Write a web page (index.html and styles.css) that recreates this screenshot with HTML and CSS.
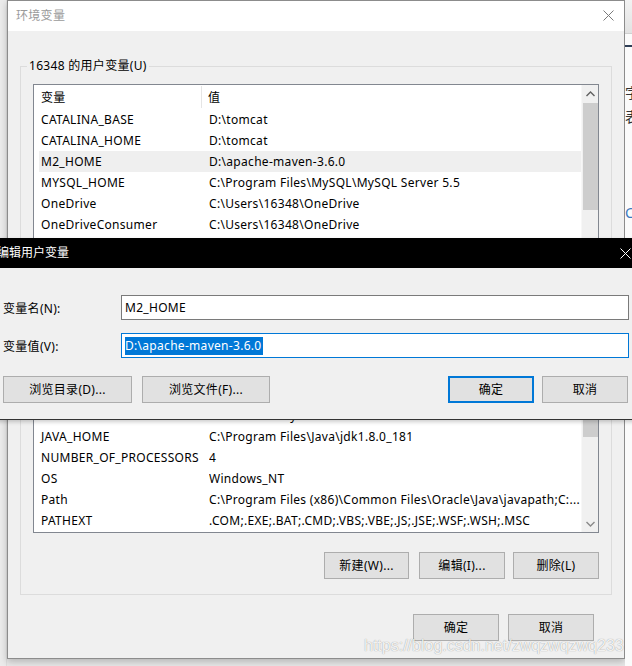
FILE: index.html
```html
<!DOCTYPE html>
<html lang="zh-CN">
<head>
<meta charset="utf-8">
<title>环境变量</title>
<link rel="stylesheet" href="styles.css">
</head>
<body>
<div class="desk">
  <div class="strip-left"></div>
  <div class="win">
    <div class="titlebar">
      <span class="title">环境变量</span>
      <svg class="close" width="11" height="11" viewBox="0 0 11 11"><path d="M0.5 0.5L10.5 10.5M10.5 0.5L0.5 10.5" stroke="#7a7a7a" stroke-width="1" fill="none"/></svg>
    </div>
    <div class="winbody">
      <fieldset class="group">
        <legend>16348 的用户变量(U)</legend>
        <div class="list">
          <div class="list-main">
            <div class="hdr"><div class="hc1">变量</div><div class="hc2">值</div></div>
            <div class="rows">
              <div class="row"><span class="c1">CATALINA_BASE</span><span class="c2">D:\tomcat</span></div>
              <div class="row"><span class="c1">CATALINA_HOME</span><span class="c2">D:\tomcat</span></div>
              <div class="row sel"><span class="c1">M2_HOME</span><span class="c2">D:\apache-maven-3.6.0</span></div>
              <div class="row"><span class="c1">MYSQL_HOME</span><span class="c2">C:\Program Files\MySQL\MySQL Server 5.5</span></div>
              <div class="row"><span class="c1">OneDrive</span><span class="c2">C:\Users\16348\OneDrive</span></div>
              <div class="row"><span class="c1">OneDriveConsumer</span><span class="c2">C:\Users\16348\OneDrive</span></div>
            </div>
            <div class="rows rows-bottom">
              <div class="row"><span class="c1">DriverData</span><span class="c2">C:\Windows\System32\Drivers\DriverData</span></div>
              <div class="row"><span class="c1">JAVA_HOME</span><span class="c2">C:\Program Files\Java\jdk1.8.0_181</span></div>
              <div class="row"><span class="c1">NUMBER_OF_PROCESSORS</span><span class="c2">4</span></div>
              <div class="row"><span class="c1">OS</span><span class="c2">Windows_NT</span></div>
              <div class="row"><span class="c1">Path</span><span class="c2">C:\Program Files (x86)\Common Files\Oracle\Java\javapath;C:...</span></div>
              <div class="row"><span class="c1">PATHEXT</span><span class="c2">.COM;.EXE;.BAT;.CMD;.VBS;.VBE;.JS;.JSE;.WSF;.WSH;.MSC</span></div>
            </div>
          </div>
          <div class="vscroll">
            <div class="sb-arrow"><svg width="9" height="6" viewBox="0 0 9 6"><path d="M0.5 5L4.5 1L8.5 5" stroke="#606060" stroke-width="1.4" fill="none"/></svg></div>
            <div class="thumb thumb-top"></div>
            <div class="thumb thumb-bottom"></div>
            <div class="sb-arrow sb-down"><svg width="9" height="6" viewBox="0 0 9 6"><path d="M0.5 1L4.5 5L8.5 1" stroke="#8a8a8a" stroke-width="1.4" fill="none"/></svg></div>
          </div>
        </div>
        <div class="btnrow">
          <button class="btn w85">新建(W)...</button>
          <button class="btn w86 g10">编辑(I)...</button>
          <button class="btn w86 g8">删除(L)</button>
        </div>
      </fieldset>
      <div class="btnrow main-btns">
        <button class="btn w86">确定</button>
        <button class="btn w86 g9">取消</button>
      </div>
    </div>
  </div>
  <div class="strip-right">
    <div class="bg-ridge"></div>
    <div class="bg-line"></div>
    <div class="bg-char ch1">字</div>
    <div class="bg-char ch2">表</div>
    <div class="bg-char ch3">C</div>
  </div>
</div>

<div class="dialog">
  <div class="dlg-title">
    <span>编辑用户变量</span>
    <svg class="dlg-close" width="11" height="11" viewBox="0 0 11 11"><path d="M0.5 0.5L10.5 10.5M10.5 0.5L0.5 10.5" stroke="#ffffff" stroke-width="1" fill="none"/></svg>
  </div>
  <div class="dlg-body">
    <div class="field">
      <label class="lbl">变量名(N):</label>
      <div class="input">M2_HOME</div>
    </div>
    <div class="field f2">
      <label class="lbl">变量值(V):</label>
      <div class="input focus"><span class="selected">D:\apache-maven-3.6.0</span></div>
    </div>
    <div class="dlg-btns">
      <button class="btn w129">浏览目录(D)...</button>
      <button class="btn w128 g10">浏览文件(F)...</button>
      <button class="btn w86 default push">确定</button>
      <button class="btn w86 g8">取消</button>
    </div>
  </div>
</div>

<div class="watermark">https://blog.csdn.net/zwqzwqzwq233</div>
</body>
</html>
```

FILE: styles.css
```css
* { box-sizing: border-box; }

html, body {
  margin: 0;
  padding: 0;
}

body {
  width: 632px;
  height: 666px;
  overflow: hidden;
  position: relative;
  background: #e9e9e9;
  font-family: "Noto Sans", "Noto Sans CJK SC", sans-serif;
  font-size: 12px;
  letter-spacing: 0.3px;
  color: #000;
}

.desk {
  display: flex;
  height: 666px;
}

.strip-left {
  width: 7px;
  flex: none;
  background: #ebebeb;
  border-right: 1px solid #dedede;
}

.win {
  width: 618px;
  height: 659px;
  flex: none;
  border: 1px solid #8c8c8c;
  background: #f0f0f0;
  box-shadow: 0 3px 7px rgba(0, 0, 0, 0.22);
  display: flex;
  flex-direction: column;
}

.titlebar {
  height: 30px;
  background: #fff;
  display: flex;
  align-items: center;
  padding: 0 10px 0 8px;
}

.title {
  color: #9a9a9a;
  line-height: 30px;
}

.close {
  margin-left: auto;
  margin-top: -1px;
}

.winbody {
  flex: 1;
  display: flex;
  flex-direction: column;
}

.group {
  margin: 27px 12px 0 12px;
  padding: 10px 12px 15px 12px;
  border: 1px solid #dcdcdc;
  min-width: 0;
}

.group legend {
  padding: 0 2px;
  margin-left: -6px;
  line-height: 16px;
  height: 16px;
}

.list {
  height: 449px;
  border: 1px solid #828790;
  background: #fff;
  display: flex;
}

.list-main {
  flex: 1;
  min-width: 0;
  display: flex;
  flex-direction: column;
}

.hdr {
  height: 24px;
  display: flex;
  flex: none;
}

.hc1 {
  width: 168px;
  padding-left: 7px;
  border-right: 1px solid #e5e5e5;
  margin: 1px 0;
  padding-top: 1px;
  line-height: 21px;
}

.hc2 {
  padding-left: 6px;
  padding-top: 2px;
  line-height: 21px;
}

.rows {
  display: flex;
  flex-direction: column;
  padding-left: 5px;
}

.rows-bottom {
  margin-top: auto;
  padding-bottom: 1px;
}

.row {
  height: 21px;
  padding-top: 1px;
  line-height: 20px;
  display: flex;
  white-space: nowrap;
  overflow: hidden;
}

.row.sel {
  background: #efefef;
}

.c1 {
  width: 170px;
  flex: none;
  padding-left: 2px;
}

.c2 {
  flex: 1;
  overflow: hidden;
}

.vscroll {
  width: 17px;
  flex: none;
  background: #f0f0f0;
  display: flex;
  flex-direction: column;
  align-items: center;
  border-left: 1px solid #f7f7f7;
}

.sb-arrow {
  height: 17px;
  width: 15px;
  display: flex;
  align-items: center;
  justify-content: center;
  flex: none;
}

.thumb {
  width: 15px;
  background: #cdcdcd;
  flex: none;
}

.thumb-top {
  margin-top: 1px;
  height: 107px;
}

.thumb-bottom {
  margin-top: 190px;
  height: 37px;
}

.sb-down {
  margin-top: auto;
}

.btnrow {
  display: flex;
  justify-content: flex-end;
  margin-top: 19px;
}

.main-btns {
  margin-right: 30px;
}

.btn {
  height: 27px;
  padding: 0;
  background: #e1e1e1;
  border: 1px solid #adadad;
  font-family: "Noto Sans", "Noto Sans CJK SC", sans-serif;
  font-size: 12px;
  letter-spacing: 0.3px;
  color: #000;
  line-height: 25px;
  flex: none;
}

.w85 { width: 85px; }
.w86 { width: 86px; }
.w128 { width: 128px; }
.w129 { width: 129px; }
.g8 { margin-left: 8px; }
.g9 { margin-left: 9px; }
.g10 { margin-left: 10px; }

.btn.default {
  border: 2px solid #0078d7;
  line-height: 23px;
}

.strip-right {
  flex: 1;
  background: #fbfbfb;
  overflow: hidden;
  display: flex;
  flex-direction: column;
}

.bg-ridge {
  height: 34px;
  background: linear-gradient(#f3f3f3, #e2e2e2);
  border-bottom: 1px solid #d0d0d0;
}

.bg-line {
  height: 2px;
  margin-top: 11px;
  background: #2e3e56;
}

.bg-char {
  font-size: 14px;
  line-height: 16px;
  color: #333;
}

.ch1 { margin-top: 38px; }
.ch2 { margin-top: 8px; }
.ch3 { margin-top: 80px; color: #3a78c0; }

/* edit dialog overlay */
.dialog {
  position: absolute;
  left: -6px;
  top: 238px;
  width: 646px;
  background: #f0f0f0;
  border-bottom: 1px solid #333;
  box-shadow: 0 2px 4px rgba(0, 0, 0, 0.2);
}

.dlg-title {
  height: 30px;
  background: #000;
  color: #fff;
  display: flex;
  align-items: center;
  padding-left: 3px;
  line-height: 30px;
  letter-spacing: 0;
}

.dlg-close {
  margin-left: auto;
  margin-right: 9px;
}

.dlg-body {
  padding: 27px 11px 16px 9px;
}

.field {
  display: flex;
  align-items: center;
  height: 25px;
}

.f2 {
  margin-top: 13px;
}

.lbl {
  width: 118px;
  flex: none;
}

.input {
  flex: 1;
  height: 25px;
  border: 1px solid #7a7a7a;
  background: #fff;
  padding-left: 3px;
  line-height: 23px;
  white-space: nowrap;
}

.input.focus {
  border-color: #0078d7;
  display: flex;
  align-items: center;
}

.selected {
  display: inline-block;
  background: #0078d7;
  color: #fff;
  line-height: 18px;
  height: 18px;
  padding-right: 1px;
}

.dlg-btns {
  display: flex;
  margin-top: 18px;
  margin-right: 1px;
}

.push {
  margin-left: auto;
}

.watermark {
  position: absolute;
  left: 364px;
  top: 637px;
  font-family: "Liberation Sans", Arial, sans-serif;
  font-size: 16px;
  line-height: 18px;
  letter-spacing: 0;
  color: rgba(255, 255, 255, 0.9);
  text-shadow: 0 0 1px rgba(0, 0, 0, 0.45);
  white-space: nowrap;
}
```
